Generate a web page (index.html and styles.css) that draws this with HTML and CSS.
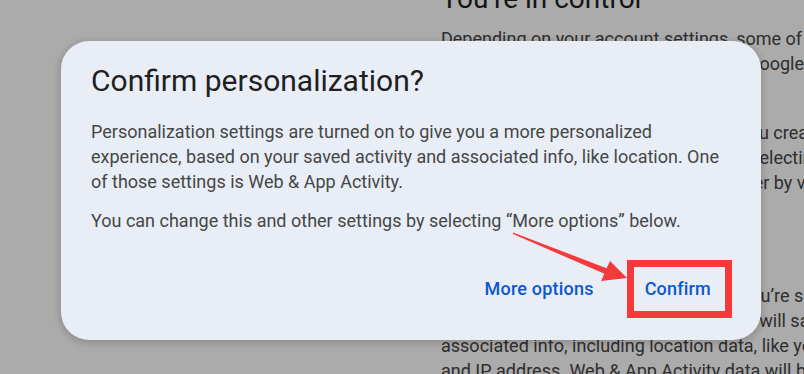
FILE: index.html
```html
<!DOCTYPE html>
<html lang="en">
    <head>
        <meta charset="utf-8" />
        <title>Confirm personalization</title>
        <link rel="stylesheet" href="styles.css">
    </head>
    <body>
        <div id="page">
            <div class="column">
                <h2 class="heading">You’re in control</h2>
                <p>Depending on your account settings, some of this data may be<br>
                this data may be associated with your Google Account and<br>
                information.</p>
                <p>Activity is saved by Google and when you create<br>
                or change settings, you can choose by selecting<br>
                the options you like, or turn them off later by visiting<br>
                your Google Account.</p>
                <p>Web &amp; App Activity</p>
                <p>When Web &amp; App Activity is on, and if you’re signed in,<br>
                across all Google services, then Google will save your activity,<br>
                associated info, including location data, like your device<br>
                and IP address. Web &amp; App Activity data will be used</p>
            </div>
        </div>

        <div id="scrim"></div>

        <div id="dialog">
            <h1 class="title">Confirm personalization?</h1>
            <div class="content">
                <p>Personalization settings are turned on to give you a more personalized experience, based on your saved activity and associated info, like location. One of those settings is Web &amp; App Activity.</p>
                <p>You can change this and other settings by selecting “More options” below.</p>
            </div>
            <div class="actions">
                <button class="btn">More options</button>
                <button class="btn">Confirm</button>
            </div>
        </div>

        <!-- annotation drawn over the screenshot -->
        <div class="mark-box"></div>
        <svg class="mark-arrow" width="804" height="374" viewBox="0 0 804 374">
            <polygon points="513,232.5 606.6,268.2 610,261 627,278 601,281 604.4,273.8 513,234" fill="#f53a3c"/>
        </svg>
    </body>
</html>
```

FILE: styles.css
```css
* {
    margin: 0;
    padding: 0;
}

body {
    width: 804px;
    height: 374px;
    overflow: hidden;
    position: relative;
    background: #fff;
    font-family: Roboto, "Liberation Sans", sans-serif;
}

#page {
    height: 374px;
    overflow: hidden;
}

.column {
    padding-left: 441px;
    color: #454545;
    font-size: 18px;
    line-height: 25px;
    white-space: nowrap;
}

.column .heading {
    margin-top: -17px;
    margin-bottom: 11px;
    font-size: 28px;
    line-height: 32px;
    font-weight: 400;
    color: #1f1f1f;
}

.column p {
    margin-bottom: 19px;
}

#scrim {
    position: absolute;
    inset: 0;
    background: rgba(0, 0, 0, 0.33);
}

#dialog {
    position: absolute;
    left: 61px;
    top: 41px;
    width: 700px;
    height: 299px;
    box-sizing: border-box;
    padding: 22px 26px 32px 30px;
    display: flex;
    flex-direction: column;
    background: #e9edf6;
    border-radius: 28px;
    box-shadow: 0 2px 6px 2px rgba(0, 0, 0, 0.15);
}

.title {
    font-size: 30px;
    line-height: 36px;
    font-weight: 400;
    color: #1f1f1f;
}

.content {
    margin-top: 20px;
    padding-right: 12px;
    color: #444746;
    font-size: 18px;
    line-height: 25px;
}

.content p + p {
    margin-top: 14px;
}

.actions {
    margin-top: auto;
    display: flex;
    justify-content: flex-end;
    gap: 3px;
}

.btn {
    height: 40px;
    padding: 0 24px;
    border: none;
    background: none;
    font-family: Roboto, "Liberation Sans", sans-serif;
    font-size: 18px;
    font-weight: 500;
    letter-spacing: 0.2px;
    color: #0b57d0;
}

.mark-box {
    position: absolute;
    left: 627px;
    top: 260px;
    width: 105px;
    height: 58px;
    box-sizing: border-box;
    border: 7px solid #f53a3c;
}

.mark-arrow {
    position: absolute;
    left: 0;
    top: 0;
}
```
